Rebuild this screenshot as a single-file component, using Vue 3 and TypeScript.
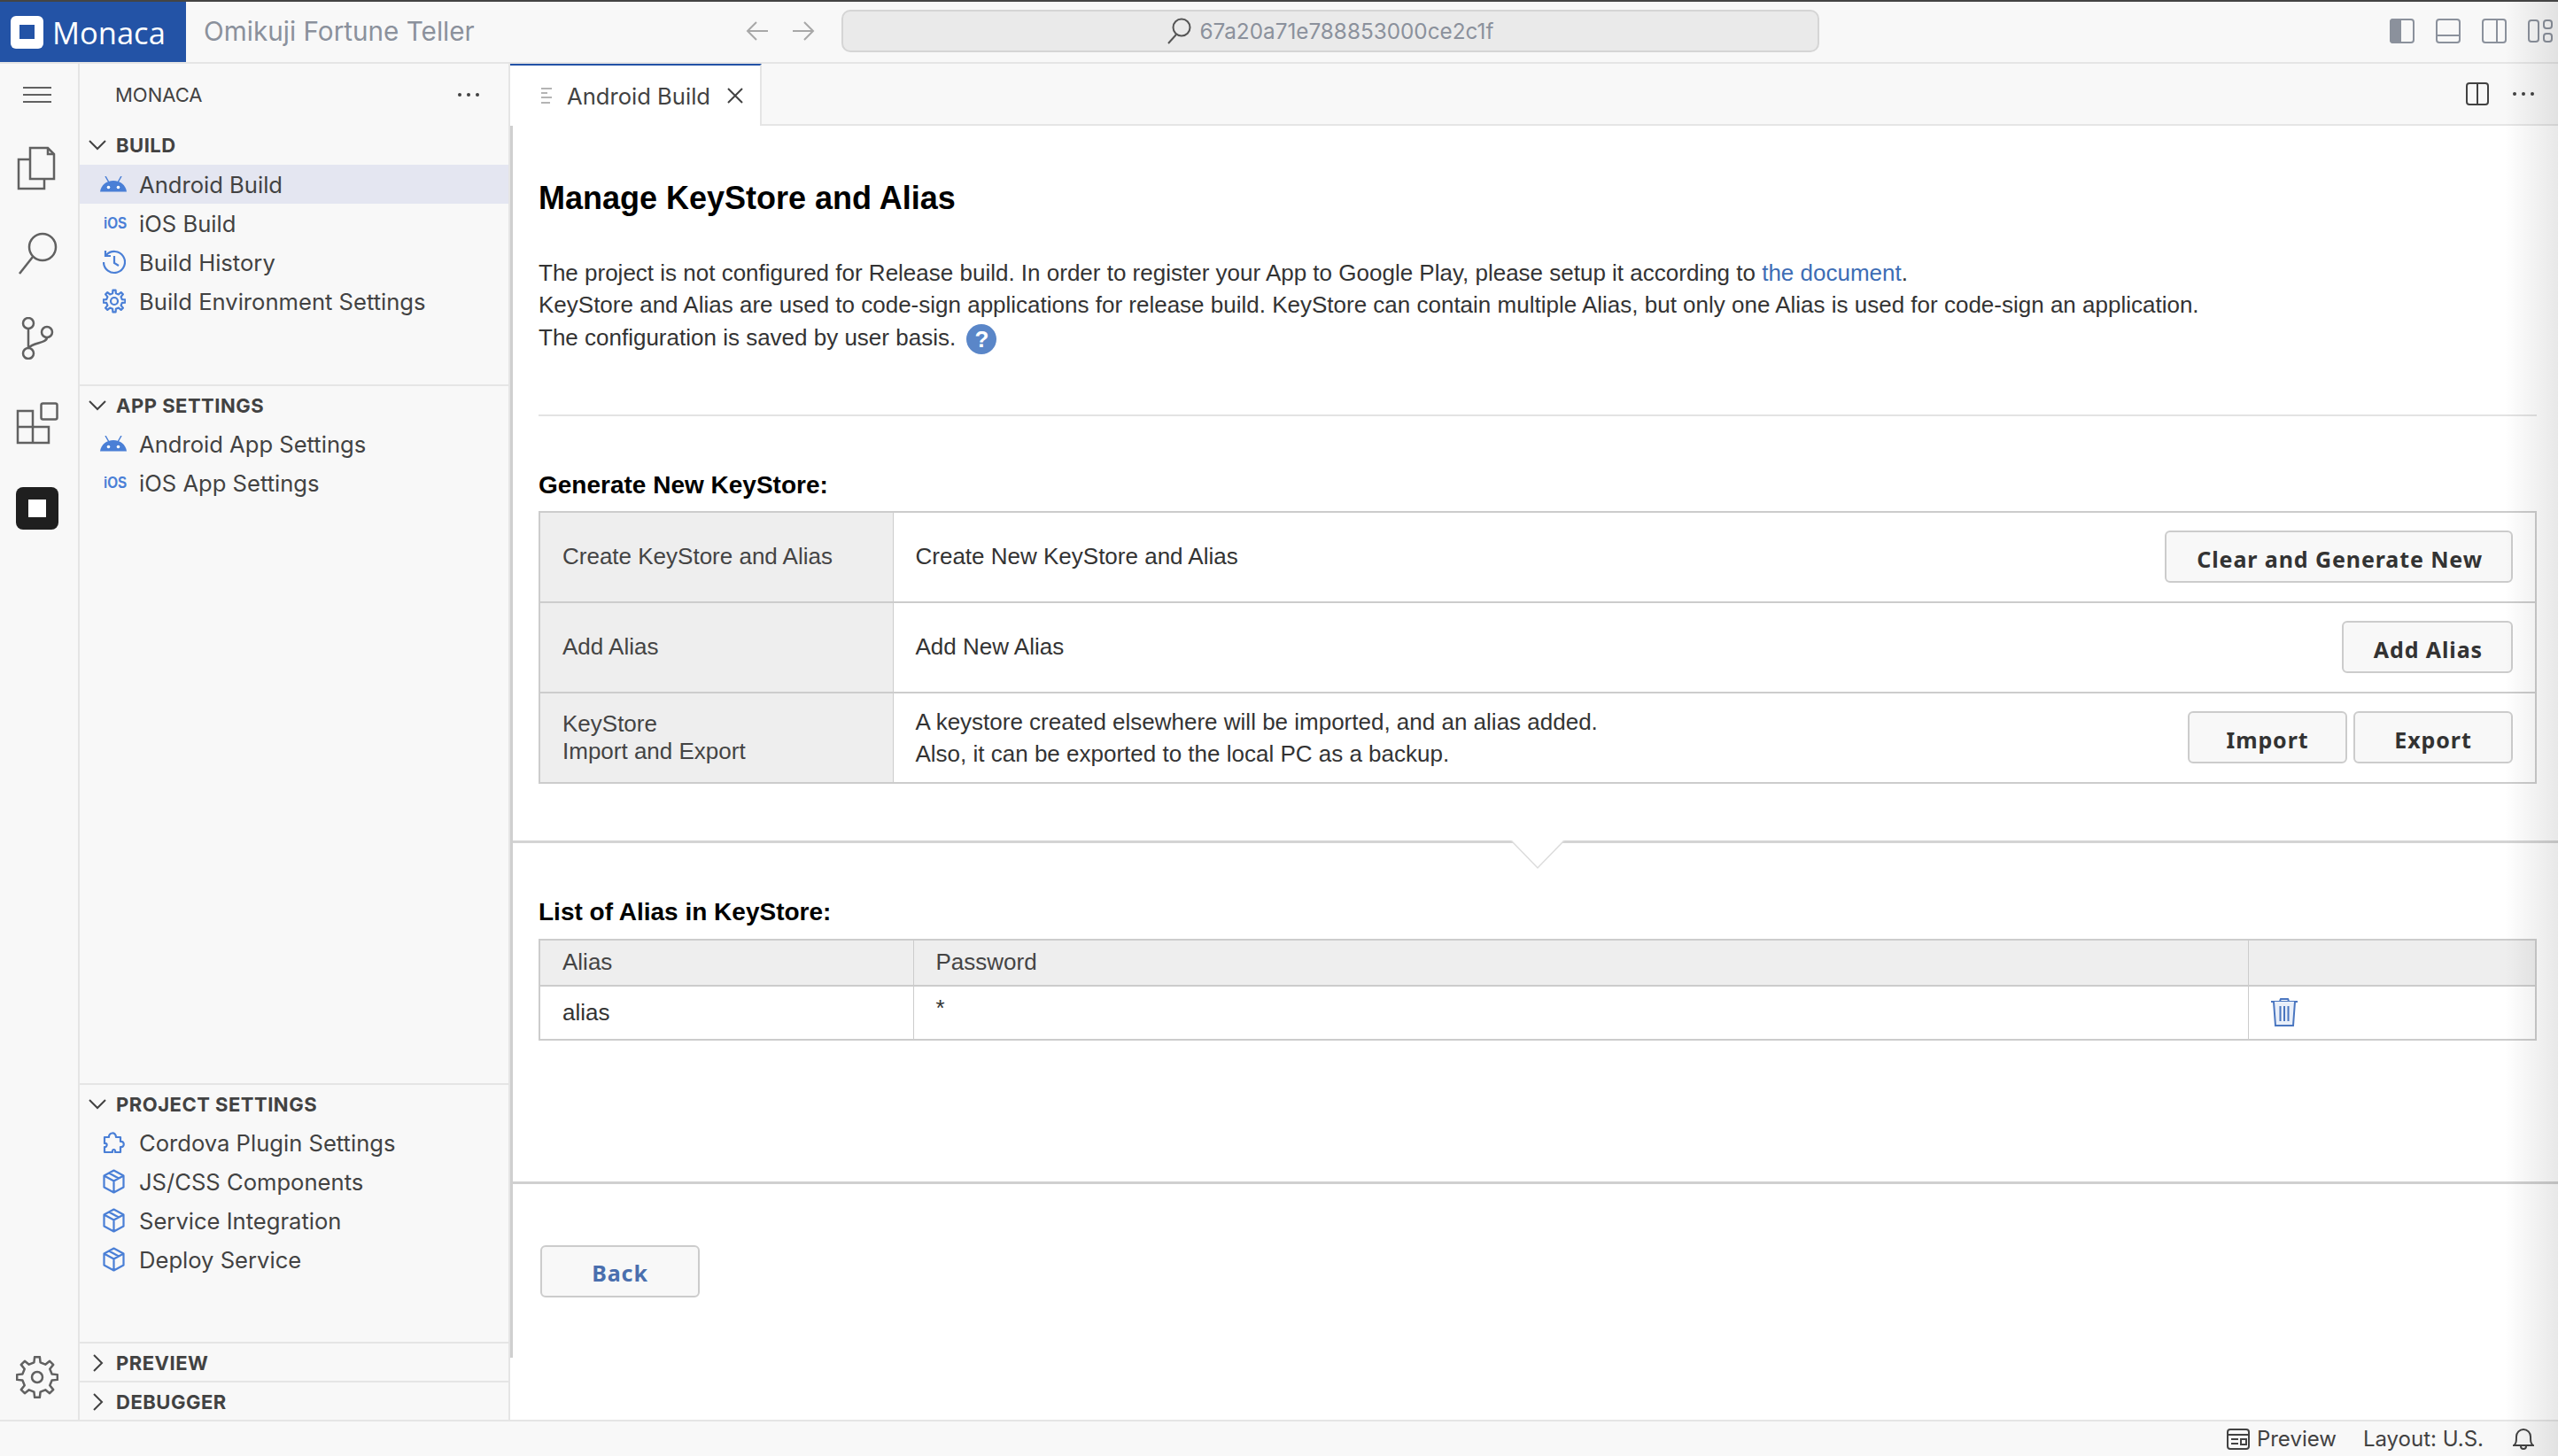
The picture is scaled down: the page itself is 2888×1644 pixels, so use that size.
<script setup lang="ts">
interface NavItem {
  label: string
  icon: string
  active?: boolean
}

const buildItems: NavItem[] = [
  { label: 'Android Build', icon: 'android', active: true },
  { label: 'iOS Build', icon: 'ios' },
  { label: 'Build History', icon: 'history' },
  { label: 'Build Environment Settings', icon: 'gear' },
]

const appItems: NavItem[] = [
  { label: 'Android App Settings', icon: 'android' },
  { label: 'iOS App Settings', icon: 'ios' },
]

const projectItems: NavItem[] = [
  { label: 'Cordova Plugin Settings', icon: 'puzzle' },
  { label: 'JS/CSS Components', icon: 'box' },
  { label: 'Service Integration', icon: 'box' },
  { label: 'Deploy Service', icon: 'box' },
]

const sections = [
  { title: 'BUILD', items: buildItems, cls: 'sec-build' },
  { title: 'APP SETTINGS', items: appItems, cls: 'sec-app' },
  { title: 'PROJECT SETTINGS', items: projectItems, cls: 'sec-project' },
]

// 歯車のアウトラインを計算する
function gearPath(cx: number, cy: number, outer: number, inner: number, teeth: number) {
  const step = (Math.PI * 2) / teeth
  const pts: string[] = []
  for (let i = 0; i < teeth; i++) {
    const a = i * step - Math.PI / 2
    const w = step * 0.2
    const list: [number, number][] = [
      [inner, a - w * 1.35],
      [outer, a - w * 0.8],
      [outer, a + w * 0.8],
      [inner, a + w * 1.35],
    ]
    for (const [r, t] of list) {
      pts.push(`${(cx + r * Math.cos(t)).toFixed(2)} ${(cy + r * Math.sin(t)).toFixed(2)}`)
    }
  }
  return 'M' + pts.join(' L') + ' Z'
}

const bigGear = gearPath(24, 24, 23, 17, 8)
const smallGear = gearPath(13, 14, 12.5, 9, 8)
</script>

<template>
  <div class="app">
    <header class="titlebar">
      <div class="brand">
        <span class="brand-logo"><span class="brand-hole"></span></span>
        <span class="brand-name">Monaca</span>
      </div>
      <div class="project-name">Omikuji Fortune Teller</div>
      <div class="nav-arrows">
        <svg width="26" height="24" viewBox="0 0 26 24" fill="none" stroke="#a8a8a8" stroke-width="2">
          <path d="M25 12H2M12 2L2 12l10 10" />
        </svg>
        <svg width="26" height="24" viewBox="0 0 26 24" fill="none" stroke="#a8a8a8" stroke-width="2">
          <path d="M1 12h23M14 2l10 10-10 10" />
        </svg>
      </div>
      <div class="address">
        <svg width="28" height="30" viewBox="0 0 28 30" fill="none" stroke="#555" stroke-width="2">
          <circle cx="17" cy="11" r="9.5" />
          <path d="M11 19L2 29" />
        </svg>
        <span>67a20a71e788853000ce2c1f</span>
      </div>
      <div class="layout-icons">
        <svg width="28" height="28" viewBox="0 0 28 28" fill="none" stroke="#8b919c" stroke-width="2">
          <rect x="1" y="1" width="26" height="26" rx="3" />
          <path d="M1 4a3 3 0 0 1 3-3h8v26H4a3 3 0 0 1-3-3z" fill="#8b919c" />
        </svg>
        <svg width="28" height="28" viewBox="0 0 28 28" fill="none" stroke="#8b919c" stroke-width="2">
          <rect x="1" y="1" width="26" height="26" rx="3" />
          <path d="M1 19h26" />
        </svg>
        <svg width="28" height="28" viewBox="0 0 28 28" fill="none" stroke="#8b919c" stroke-width="2">
          <rect x="1" y="1" width="26" height="26" rx="3" />
          <path d="M17 1v26" />
        </svg>
        <svg width="28" height="28" viewBox="0 0 28 28" fill="none" stroke="#8b919c" stroke-width="2">
          <rect x="1" y="2" width="11" height="24" rx="3" />
          <rect x="18" y="2" width="9" height="9" rx="3" />
          <rect x="18" y="17" width="9" height="9" rx="3" />
        </svg>
      </div>
    </header>

    <div class="body">
      <nav class="activity">
        <div class="act-slot menu">
          <svg width="32" height="20" viewBox="0 0 32 20" stroke="#616161" stroke-width="2">
            <path d="M0 2h32M0 10h32M0 18h32" />
          </svg>
        </div>
        <div class="act-slot">
          <svg width="48" height="52" viewBox="0 0 48 52" fill="none" stroke="#616161" stroke-width="2.5">
            <path d="M16 3h20l7 7v28H16zM36 3v7h7M16 16H3v33h29V38" />
          </svg>
        </div>
        <div class="act-slot">
          <svg width="48" height="48" viewBox="0 0 48 48" fill="none" stroke="#616161" stroke-width="2.5">
            <circle cx="30" cy="17" r="15" />
            <path d="M19 28L4 47" />
          </svg>
        </div>
        <div class="act-slot">
          <svg width="48" height="48" viewBox="0 0 48 48" fill="none" stroke="#616161" stroke-width="2.5">
            <circle cx="14" cy="7" r="6" />
            <circle cx="35" cy="17" r="6" />
            <circle cx="14" cy="41" r="6" />
            <path d="M14 13v22M35 23c0 7-15 5-21 12" />
          </svg>
        </div>
        <div class="act-slot">
          <svg width="48" height="48" viewBox="0 0 48 48" fill="none" stroke="#616161" stroke-width="2.5">
            <rect x="28.5" y="1.5" width="18" height="18" rx="2" />
            <path d="M2 10h17v18h18v18H2zM2 28h17v18" />
          </svg>
        </div>
        <div class="act-slot">
          <span class="monaca-btn"><span class="monaca-hole"></span></span>
        </div>
        <div class="act-slot gear-slot">
          <svg width="48" height="48" viewBox="0 0 48 48" fill="none" stroke="#616161" stroke-width="2.5">
            <path :d="bigGear" stroke-linejoin="round" />
            <circle cx="24" cy="24" r="6" />
          </svg>
        </div>
      </nav>

      <aside class="sidebar">
        <div class="side-head">
          <span>MONACA</span>
          <svg width="26" height="6" viewBox="0 0 26 6" fill="#424242">
            <circle cx="3" cy="3" r="2" /><circle cx="13" cy="3" r="2" /><circle cx="23" cy="3" r="2" />
          </svg>
        </div>

        <section v-for="sec in sections" :key="sec.title" class="side-sec" :class="sec.cls">
          <div class="sec-title">
            <svg class="chev" width="20" height="12" viewBox="0 0 20 12" fill="none" stroke="#424242" stroke-width="2">
              <path d="M1 1l9 9 9-9" />
            </svg>
            <span>{{ sec.title }}</span>
          </div>
          <div
            v-for="item in sec.items"
            :key="item.label"
            class="side-item"
            :class="{ active: item.active }"
          >
            <span class="item-icon">
              <svg v-if="item.icon === 'android'" width="30" height="18" viewBox="0 0 30 18">
                <path d="M0 17.5C1 10 7 5 15 5s14 5 15 12.500z" fill="#4a7fd6" />
                <path d="M6 0l4 7M24 0l-4 7" stroke="#4a7fd6" stroke-width="1.500" />
                <circle cx="9.500" cy="12.500" r="1.800" fill="#fff" />
                <circle cx="20.500" cy="12.500" r="1.800" fill="#fff" />
              </svg>
              <span v-else-if="item.icon === 'ios'" class="ios-mark">iOS</span>
              <svg v-else-if="item.icon === 'history'" class="glyph" width="26" height="28" viewBox="0 0 26 28" fill="none" stroke="#4a7fd6" stroke-width="2.200">
                <path d="M4 6a12 12 0 1 1-3 8" />
                <path d="M3 1v6h6M13 7v8l5 3" />
              </svg>
              <svg v-else-if="item.icon === 'gear'" class="glyph" width="26" height="28" viewBox="0 0 26 28" fill="none" stroke="#4a7fd6" stroke-width="2.200">
                <path :d="smallGear" stroke-linejoin="round" />
                <circle cx="13" cy="14" r="4" />
              </svg>
              <svg v-else-if="item.icon === 'puzzle'" class="glyph" width="26" height="26" viewBox="0 0 26 26" fill="none" stroke="#4a7fd6" stroke-width="2.200" stroke-linejoin="round">
                <path d="M2 7h5c-1-5 8-7 8 0h5v5c5-1 5 7 0 6v6h-6c1-4-4-4-3 0H2v-6c3 1 4-5 0-4z" />
              </svg>
              <svg v-else class="glyph" width="25" height="28" viewBox="0 0 25 28" fill="none" stroke="#4a7fd6" stroke-width="2.200" stroke-linejoin="round">
                <path d="M12.500 1.500L23.500 7.500v13l-11 6-11-6v-13zM1.500 7.500l11 6 11-6M12.500 13.500v13M7 4.500l11 6" />
              </svg>
            </span>
            <span>{{ item.label }}</span>
          </div>
        </section>

        <div class="side-collapsed">
          <svg width="12" height="20" viewBox="0 0 12 20" fill="none" stroke="#424242" stroke-width="2"><path d="M1 1l9 9-9 9" /></svg>
          <span>PREVIEW</span>
        </div>
        <div class="side-collapsed">
          <svg width="12" height="20" viewBox="0 0 12 20" fill="none" stroke="#424242" stroke-width="2"><path d="M1 1l9 9-9 9" /></svg>
          <span>DEBUGGER</span>
        </div>
      </aside>

      <main class="main">
        <div class="tabs">
          <div class="tab">
            <svg width="16" height="18" viewBox="0 0 16 18" stroke="#b4b4b4" stroke-width="2">
              <path d="M0 1h12M0 6h7M0 11h12M0 17h10" />
            </svg>
            <span class="tab-label">Android Build</span>
            <svg width="18" height="18" viewBox="0 0 18 18" stroke="#424242" stroke-width="2"><path d="M1 1l16 16M17 1L1 17" /></svg>
          </div>
          <div class="tab-actions">
            <svg width="26" height="26" viewBox="0 0 26 26" fill="none" stroke="#424242" stroke-width="2">
              <rect x="1" y="1" width="24" height="24" rx="3" />
              <path d="M13 1v24" />
            </svg>
            <svg width="26" height="6" viewBox="0 0 26 6" fill="#424242">
              <circle cx="3" cy="3" r="2" /><circle cx="13" cy="3" r="2" /><circle cx="23" cy="3" r="2" />
            </svg>
          </div>
        </div>

        <div class="content">
          <div class="block">
            <h1>Manage KeyStore and Alias</h1>
            <p class="intro">
              The project is not configured for Release build. In order to register your App to Google Play, please setup it according to <a class="link">the document</a>.<br />
              KeyStore and Alias are used to code-sign applications for release build. KeyStore can contain multiple Alias, but only one Alias is used for code-sign an application.<br />
              The configuration is saved by user basis.
              <span class="help">?</span>
            </p>
            <div class="rule"></div>
            <h2 class="gen-title">Generate New KeyStore:</h2>
            <table class="grid gen-table">
              <colgroup>
                <col class="gen-col" />
                <col />
              </colgroup>
              <tbody>
                <tr>
                  <th>Create KeyStore and Alias</th>
                  <td>
                    <div class="row-inner">
                      <span>Create New KeyStore and Alias</span>
                      <button class="btn">Clear and Generate New</button>
                    </div>
                  </td>
                </tr>
                <tr>
                  <th>Add Alias</th>
                  <td>
                    <div class="row-inner">
                      <span>Add New Alias</span>
                      <button class="btn">Add Alias</button>
                    </div>
                  </td>
                </tr>
                <tr>
                  <th class="two-line">KeyStore<br />Import and Export</th>
                  <td>
                    <div class="row-inner">
                      <span class="two-line-val">A keystore created elsewhere will be imported, and an alias added.<br />Also, it can be exported to the local PC as a backup.</span>
                      <span class="btn-pair">
                        <button class="btn btn-imp">Import</button>
                        <button class="btn btn-imp">Export</button>
                      </span>
                    </div>
                  </td>
                </tr>
              </tbody>
            </table>
          </div>

          <div class="divider">
            <svg class="notch" width="62" height="33" viewBox="0 0 62 33">
              <path d="M1 0L31 31 61 0" fill="#fff" stroke="#dcdcdc" stroke-width="1.500" />
            </svg>
          </div>

          <div class="block">
            <h2 class="list-title">List of Alias in KeyStore:</h2>
            <table class="grid list-table">
              <colgroup>
                <col class="alias-col" />
                <col class="pass-col" />
                <col />
              </colgroup>
              <thead>
                <tr>
                  <th>Alias</th>
                  <th>Password</th>
                  <th></th>
                </tr>
              </thead>
              <tbody>
                <tr>
                  <td>alias</td>
                  <td class="pass">*</td>
                  <td>
                    <svg class="trash" width="30" height="32" viewBox="0 0 30 32" fill="none" stroke="#4a76c0" stroke-width="2">
                      <path d="M0 4h30M10 3l1-2h8l1 2" />
                      <path d="M3 4l2 27h20l2-27" fill="#e9eff9" />
                      <path d="M10.500 9v17M15 9v17M19.500 9v17" stroke-width="2" />
                    </svg>
                  </td>
                </tr>
              </tbody>
            </table>
          </div>

          <div class="foot-line"></div>
          <div class="block">
            <button class="btn btn-back">Back</button>
          </div>
        </div>
      </main>
    </div>

    <footer class="status">
      <svg width="26" height="24" viewBox="0 0 26 24" fill="none" stroke="#424242" stroke-width="2">
        <rect x="1" y="1" width="24" height="22" rx="3" />
        <path d="M1 7h24M5 12h8M5 17h8" />
        <rect x="16" y="12" width="6" height="6" />
      </svg>
      <span class="st-preview">Preview</span>
      <span class="st-layout">Layout: U.S.</span>
      <svg width="24" height="27" viewBox="0 0 24 27" fill="none" stroke="#424242" stroke-width="2">
        <path d="M1 21c3-2 3-5 3-10a8 8 0 0 1 16 0c0 5 0 8 3 10zM9 22a3 3 0 0 0 6 0" />
      </svg>
    </footer>

    <div class="edge-shade"></div>
  </div>
</template>

<style scoped>
.app {
  position: relative;
  width: 2888px;
  height: 1644px;
  display: flex;
  flex-direction: column;
  overflow: hidden;
  background: #fff;
  font-family: Inter, "Noto Sans", sans-serif;
  color: #424242;
  border-top: 2px solid #444;
  box-sizing: border-box;
}

.titlebar {
  height: 70px;
  flex: none;
  display: flex;
  align-items: center;
  background: #f8f8f8;
  border-bottom: 2px solid #e5e5e5;
  box-sizing: border-box;
  padding-bottom: 2px;
}

.brand {
  width: 210px;
  height: 68px;
  margin-bottom: -2px;
  flex: none;
  display: flex;
  align-items: center;
  gap: 10px;
  padding-left: 12px;
  box-sizing: border-box;
  background: #2353a6;
}

.brand-logo {
  width: 37px;
  height: 37px;
  border-radius: 6px;
  background: #fff;
  display: flex;
  align-items: center;
  justify-content: center;
}

.brand-hole {
  width: 17px;
  height: 16px;
  background: #2353a6;
}

.brand-name {
  font-family: "Open Sans", sans-serif;
  font-size: 34.500px;
  font-weight: 500;
  color: #fff;
}

.project-name {
  width: 600px;
  margin-left: 20px;
  font-size: 29.700px;
  color: #8b919c;
  flex: none;
}

.nav-arrows {
  display: flex;
  gap: 26px;
  width: 108px;
  margin-left: 12px;
  flex: none;
}

.address {
  width: 1104px;
  height: 48px;
  flex: none;
  box-sizing: border-box;
  display: flex;
  align-items: center;
  justify-content: center;
  gap: 9px;
  background: #eaeaea;
  border: 2px solid #d5d5d5;
  border-radius: 10px;
  font-size: 24.300px;
  color: #8b919c;
}

.layout-icons {
  margin-left: auto;
  display: flex;
  gap: 24px;
  padding-right: 6px;
}

.body {
  flex: 1;
  min-height: 0;
  display: flex;
}

.activity {
  width: 90px;
  flex: none;
  box-sizing: border-box;
  background: #f8f8f8;
  border-right: 2px solid #e5e5e5;
  padding-right: 4px;
  display: flex;
  flex-direction: column;
}

.act-slot {
  height: 96px;
  flex: none;
  display: flex;
  align-items: center;
  justify-content: center;
}

.act-slot.menu {
  height: 70px;
}

.gear-slot {
  margin-top: auto;
}

.monaca-btn {
  width: 48px;
  height: 48px;
  border-radius: 8px;
  background: #1f1f1f;
  display: flex;
  align-items: center;
  justify-content: center;
}

.monaca-hole {
  width: 20px;
  height: 20px;
  background: #fff;
}

.sidebar {
  width: 486px;
  flex: none;
  box-sizing: border-box;
  background: #f8f8f8;
  border-right: 2px solid #e5e5e5;
  display: flex;
  flex-direction: column;
  font-size: 25.600px;
}

.side-head {
  height: 70px;
  flex: none;
  display: flex;
  align-items: center;
  justify-content: space-between;
  padding: 0 32px 0 40px;
  font-size: 22px;
}

.side-sec {
  box-sizing: border-box;
}

.sec-build {
  height: 292px;
  flex: none;
}

.sec-app {
  flex: 1;
  border-top: 2px solid #e5e5e5;
}

.sec-project {
  height: 292px;
  flex: none;
  border-top: 2px solid #e5e5e5;
}

.sec-title {
  height: 43px;
  display: flex;
  align-items: center;
  font-size: 22px;
  font-weight: 700;
  letter-spacing: 0.5px;
}

.sec-build .sec-title {
  height: 44px;
}

.chev {
  margin: 0 11px 0 10px;
  flex: none;
}

.side-item {
  height: 44px;
  display: flex;
  align-items: center;
  padding-left: 23px;
}

.side-item.active {
  background: #e4e6f1;
}

.item-icon {
  width: 44px;
  flex: none;
  display: flex;
  align-items: center;
  box-sizing: border-box;
}

.glyph {
  margin-left: 3px;
}

.ios-mark {
  display: inline-block;
  font-family: "Liberation Sans", sans-serif;
  font-size: 19px;
  font-weight: 700;
  color: #4a7fd6;
  transform: scaleX(0.8);
  transform-origin: left center;
  margin-left: 4px;
}

.side-collapsed {
  height: 44px;
  flex: none;
  box-sizing: border-box;
  border-top: 2px solid #e5e5e5;
  display: flex;
  align-items: center;
  gap: 14px;
  padding: 2px 0 0 15px;
  font-size: 22px;
  font-weight: 700;
  letter-spacing: 0.5px;
}

.main {
  flex: 1;
  min-width: 0;
  display: flex;
  flex-direction: column;
}

.tabs {
  height: 70px;
  flex: none;
  box-sizing: border-box;
  display: flex;
  justify-content: space-between;
  background: #f8f8f8;
  border-bottom: 2px solid #e5e5e5;
}

.tab {
  width: 284px;
  height: 70px;
  box-sizing: border-box;
  background: #fff;
  border-top: 2px solid #2353a6;
  border-right: 2px solid #e5e5e5;
  display: flex;
  align-items: center;
  padding-left: 35px;
  font-size: 25.600px;
}

.tab-label {
  margin: 0 19px 0 13px;
}

.tab-actions {
  display: flex;
  align-items: center;
  gap: 26px;
  padding-right: 26px;
}

.content {
  flex: 1;
  min-height: 0;
  font-family: "Liberation Sans", Arial, sans-serif;
  font-size: 26px;
  color: #333;
  background: linear-gradient(#cfcfcf, #cfcfcf) left top / 3px 1391px no-repeat #fff;
  padding-left: 3px;
}

.block {
  padding: 0 24px 0 29px;
}

h1 {
  margin: 0;
  padding-top: 61px;
  font-size: 36px;
  line-height: 42px;
  font-weight: 700;
  color: #000;
}

.intro {
  margin: 45px 0 0;
  line-height: 36.400px;
}

.link {
  color: #3d6db5;
}

.help {
  display: inline-block;
  width: 34px;
  height: 34px;
  margin-left: 5px;
  border-radius: 50%;
  background: #5a86c8;
  color: #fff;
  font-weight: 700;
  font-size: 26px;
  line-height: 34px;
  text-align: center;
  vertical-align: middle;
}

.rule {
  height: 2px;
  margin-top: 68px;
  background: #e3e3e3;
}

h2 {
  margin: 0;
  font-size: 28px;
  line-height: 32px;
  font-weight: 700;
  color: #000;
}

.gen-title {
  margin-top: 62px;
  margin-bottom: 13px;
}

.list-title {
  padding-top: 62px;
  margin-bottom: 14px;
}

.grid {
  width: 100%;
  table-layout: fixed;
  border-collapse: collapse;
  border: 2px solid #ccc;
}

.grid tr {
  border-bottom: 2px solid #ccc;
}

.grid th {
  background: #eee;
  font-weight: 400;
  text-align: left;
  color: #444;
  padding: 0 0 0 25px;
  border-right: 1px solid #ccc;
}

.grid td {
  padding: 0 25px;
  border-right: 1px solid #ccc;
}

.grid td.pass {
  vertical-align: top;
  padding-top: 9px;
}

.gen-col {
  width: 399px;
}

.gen-table tr {
  height: 102px;
}

.two-line {
  line-height: 31px;
}

.two-line-val {
  line-height: 36px;
}

.row-inner {
  display: flex;
  align-items: center;
  justify-content: space-between;
}

.btn {
  height: 59px;
  box-sizing: border-box;
  padding: 4px 32px 0 34px;
  background: #f8f8f8;
  border: 2px solid #ccc;
  border-radius: 6px;
  font-family: "Noto Sans", sans-serif;
  font-size: 25px;
  font-weight: 700;
  letter-spacing: 0.9px;
  color: #333;
}

.btn-pair {
  display: flex;
  gap: 7px;
}

.btn-imp {
  width: 180px;
  padding: 4px 0 0;
}

.divider {
  position: relative;
  height: 3px;
  margin-top: 64px;
  background: #d4d4d4;
}

.notch {
  position: absolute;
  left: 1126px;
  top: 0;
}

.alias-col {
  width: 422px;
}

.pass-col {
  width: 1507px;
}

.list-table thead tr {
  height: 52px;
}

.list-table tbody tr {
  height: 61px;
}

.trash {
  display: block;
}

.foot-line {
  height: 3px;
  margin-top: 159px;
  background: #d0d0d0;
}

.btn-back {
  width: 180px;
  margin-top: 69px;
  margin-left: 2px;
  padding: 4px 0 0;
  color: #4a6fae;
}

.status {
  height: 41px;
  flex: none;
  box-sizing: border-box;
  background: #f8f8f8;
  border-top: 2px solid #e5e5e5;
  display: flex;
  align-items: center;
  justify-content: flex-end;
  padding-right: 27px;
  font-size: 24px;
}

.st-preview {
  margin: 0 30px 0 8px;
}

.st-layout {
  margin-right: 33px;
}

.edge-shade {
  position: absolute;
  top: 0;
  right: 0;
  bottom: 0;
  width: 60px;
  background: linear-gradient(to right, rgba(0, 0, 0, 0), rgba(0, 0, 0, 0.09));
  pointer-events: none;
}
</style>
